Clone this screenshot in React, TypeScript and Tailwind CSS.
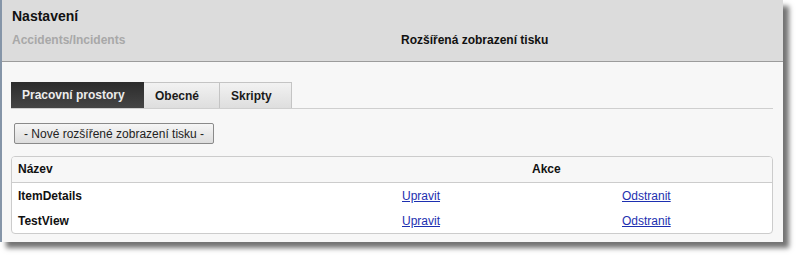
const font = { fontFamily: '"Liberation Sans", Arial, sans-serif' }

const rows = [{ name: 'ItemDetails' }, { name: 'TestView' }]

export default function App() {
  return (
    <div className="w-[799px] h-[257px] bg-white" style={font}>
      <div className="w-[783px] h-[242px] border-l-2 border-[#8595a8] bg-[#f7f7f7] shadow-[6px_6px_5px_rgba(0,0,0,0.55)] flex flex-col">
        {/* header */}
        <div className="h-[62px] bg-[#dcdcdc] border-b border-[#9c9c9c] pl-[10px] pt-[8px]">
          <div className="text-[14px] font-bold text-[#111] leading-[16px]">Nastavení</div>
          <div className="flex mt-[9px] text-[12px] font-bold leading-[14px]">
            <div className="w-[389px] text-[#a8a8a8]">Accidents/Incidents</div>
            <div className="text-[#111]">Rozšířená zobrazení tisku</div>
          </div>
        </div>

        {/* body */}
        <div className="pl-[9px] pr-[10px] pt-[20px]">
          <div className="flex border-b border-[#cfcfcf] h-[27px]">
            <div className="w-[133px] pl-[11px] flex items-center text-[12px] font-bold text-[#ececec] bg-gradient-to-b from-[#2c2c2c] to-[#454545]">
              Pracovní prostory
            </div>
            <div className="w-[76px] pl-[11px] flex items-center text-[12px] font-bold text-[#1a1a1a] bg-gradient-to-b from-[#f2f2f2] to-[#dedede] border-t border-r border-[#c4c4c4]">
              Obecné
            </div>
            <div className="w-[72px] pl-[11px] flex items-center text-[12px] font-bold text-[#1a1a1a] bg-gradient-to-b from-[#f2f2f2] to-[#dedede] border-t border-r border-[#c4c4c4]">
              Skripty
            </div>
          </div>

          <button
            type="button"
            className="mt-[14px] ml-[3px] w-[200px] h-[21px] pl-[9px] text-left text-[12px] text-[#222] rounded-[2px] border border-[#8a8a8a] bg-gradient-to-b from-[#f6f6f6] to-[#dddddd]"
          >
            - Nové rozšířené zobrazení tisku -
          </button>

          <div className="mt-[11px] w-[762px] rounded-[4px] border border-[#cccccc] bg-white overflow-hidden text-[12px]">
            <div className="flex h-[26px] items-center bg-[#f7f7f7] border-b border-[#cccccc] font-bold text-[#111]">
              <div className="w-[384px] pl-[6px]">Název</div>
              <div className="pl-[136px]">Akce</div>
            </div>
            {rows.map((r, i) => (
              <div key={r.name} className={`flex items-center ${i === 0 ? 'h-[26px]' : 'h-[24px]'}`}>
                <div className="w-[384px] pl-[6px] font-bold text-[#111]">{r.name}</div>
                <div className="w-[220px] pl-[6px]">
                  <a href="#" className="text-[#1d2fb0] underline">Upravit</a>
                </div>
                <div className="pl-[6px]">
                  <a href="#" className="text-[#1d2fb0] underline">Odstranit</a>
                </div>
              </div>
            ))}
          </div>
        </div>
      </div>
    </div>
  )
}
